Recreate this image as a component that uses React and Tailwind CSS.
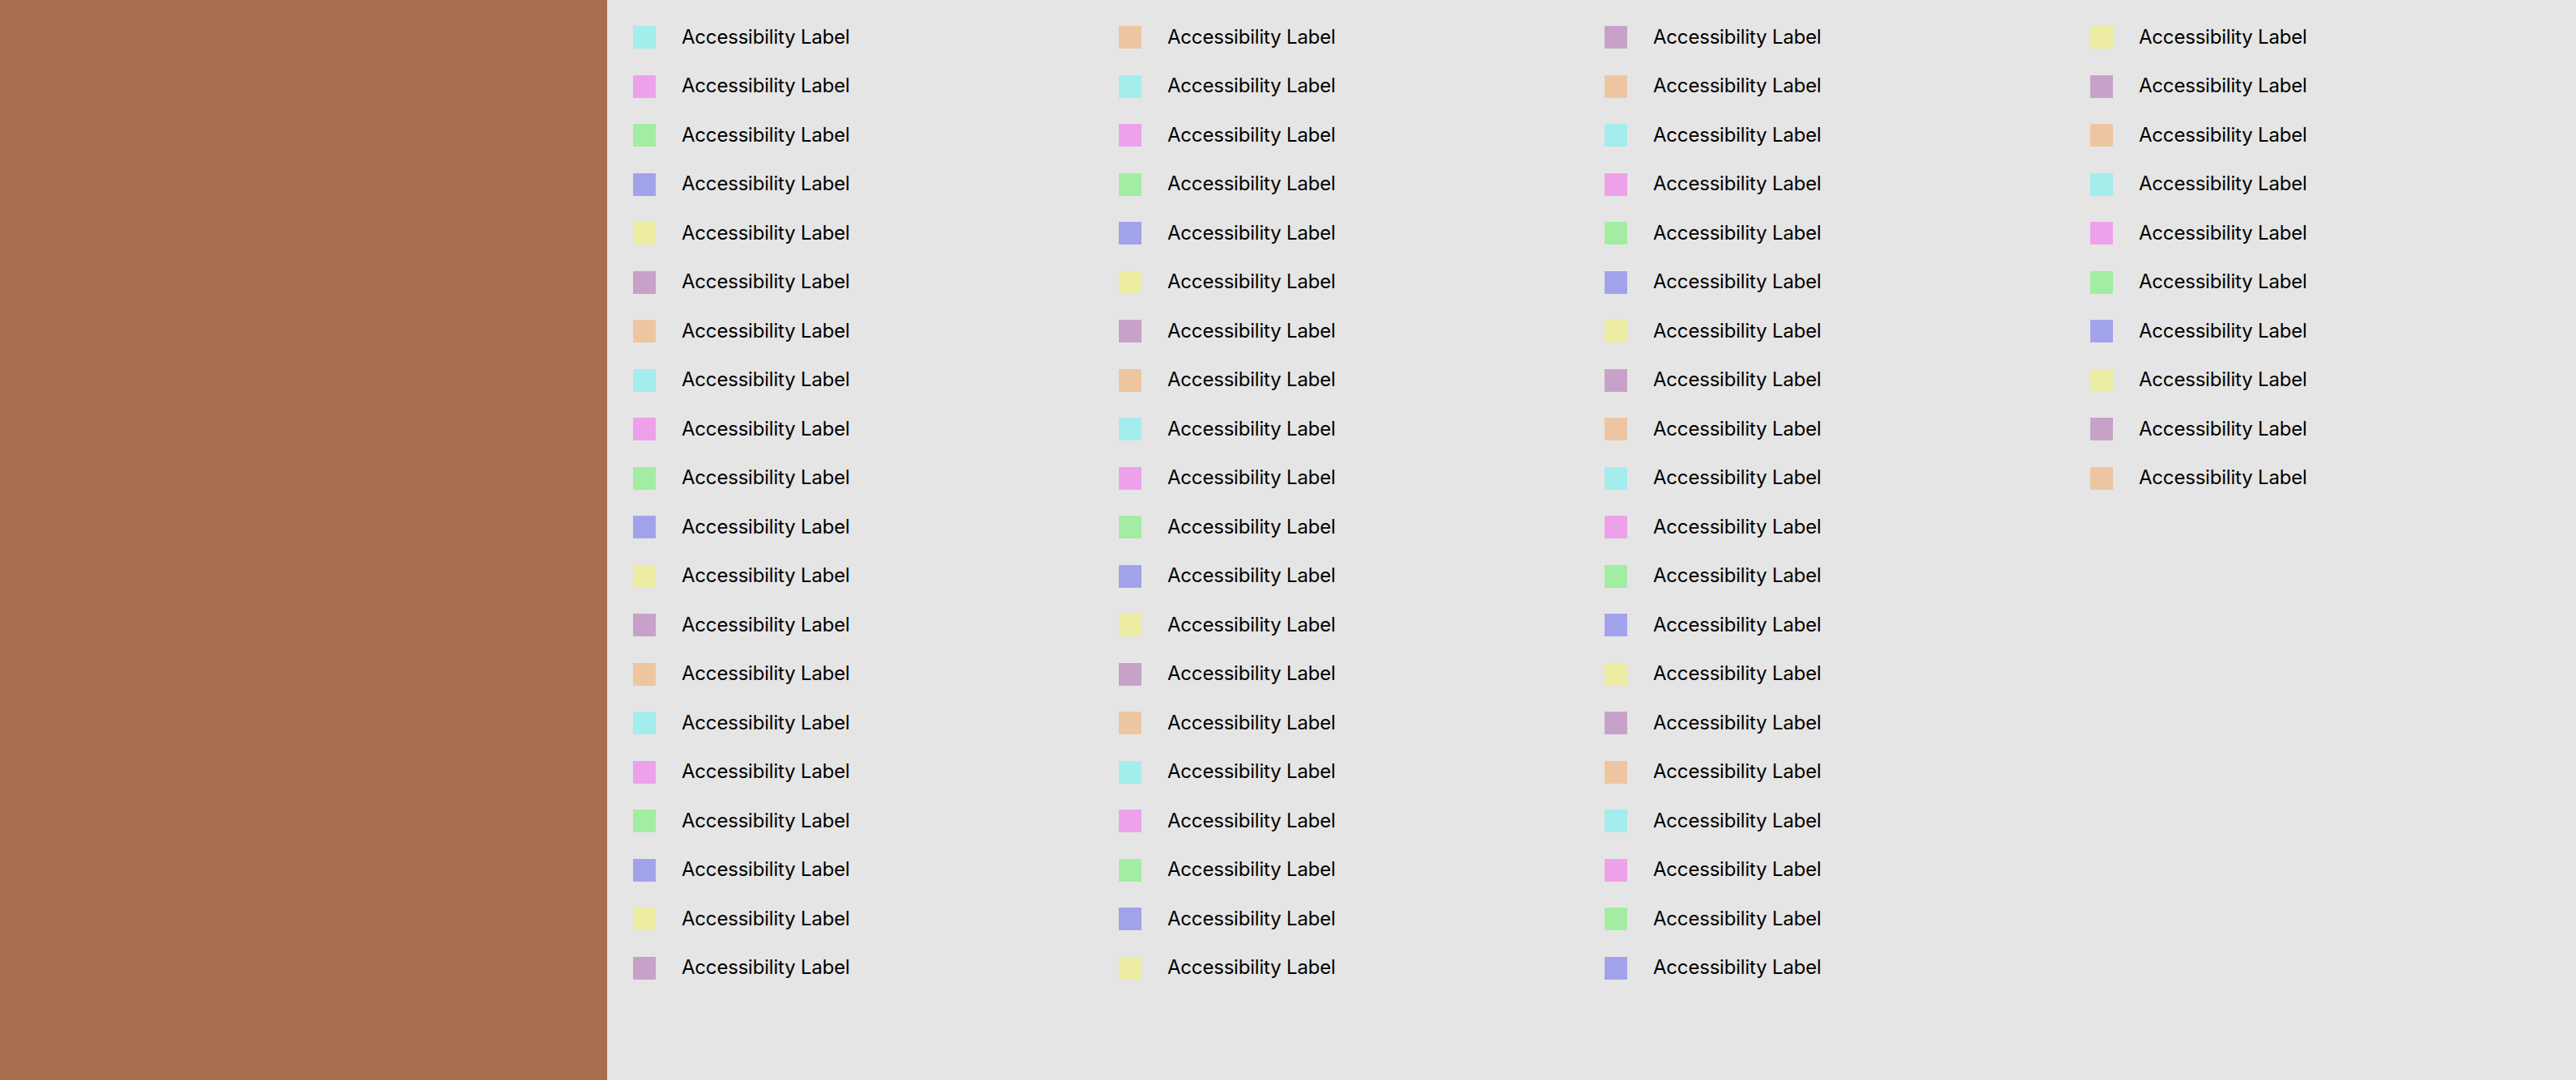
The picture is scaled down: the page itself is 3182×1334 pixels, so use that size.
const colors = [
  'bg-[#a3eded]',
  'bg-[#eda1eb]',
  'bg-[#a2eda1]',
  'bg-[#a2a2eb]',
  'bg-[#ececa2]',
  'bg-[#c7a1c7]',
  'bg-[#edc6a1]',
]

const items = Array.from({ length: 70 }, (_, i) => ({
  id: i,
  label: 'Accessibility Label',
  color: colors[i % colors.length],
}))

// 20 per column, column-major
const columns = [0, 1, 2, 3].map((c) => items.slice(c * 20, c * 20 + 20))

function Row({ item }) {
  return (
    <div className="flex h-[60.5px] items-center">
      <div className={`h-7 w-7 shrink-0 ${item.color}`} />
      <span className="ml-[32px] -mt-px text-[24px] leading-none tracking-[-0.2px] text-black">{item.label}</span>
    </div>
  )
}

export default function App() {
  return (
    <div className="flex h-screen w-full font-['Inter','Liberation_Sans',sans-serif]">
      <aside className="h-full w-[750px] shrink-0 bg-[#a66e4f]" />
      <main className="flex flex-1 bg-[#e5e5e5] pl-8 pt-[16px]">
        {columns.map((col, i) => (
          <div key={i} className="flex w-[600px] flex-col">
            {col.map((item) => (
              <Row key={item.id} item={item} />
            ))}
          </div>
        ))}
      </main>
    </div>
  )
}
